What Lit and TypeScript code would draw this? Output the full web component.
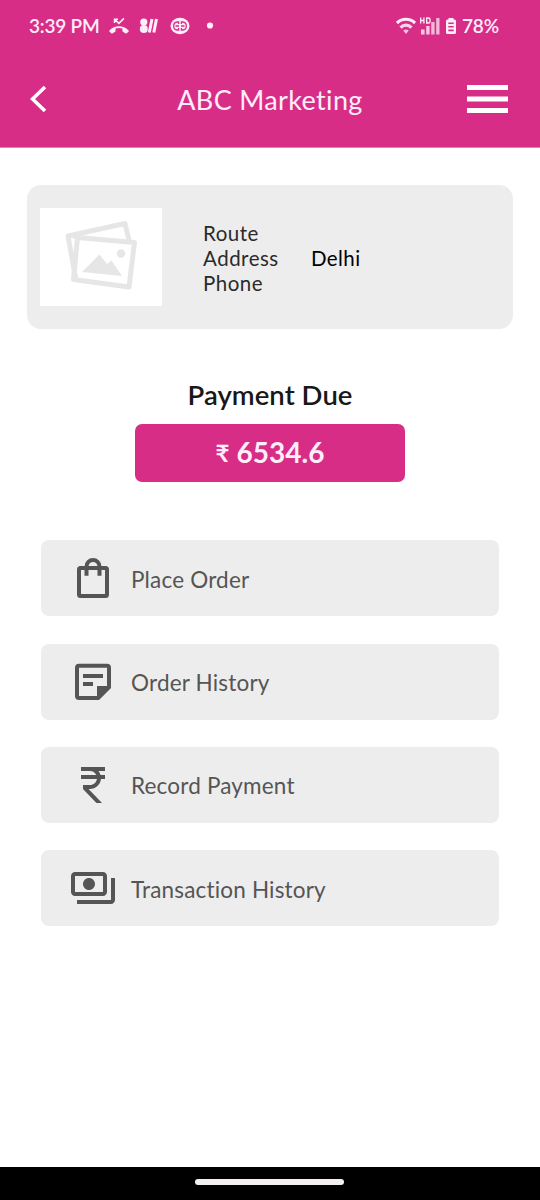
import { LitElement, html, css, svg } from "lit";
import { customElement, property } from "lit/decorators.js";

const bag = svg`
  <rect x="8" y="12" width="28" height="28" rx="1.5" fill="none" stroke="currentColor" stroke-width="4"/>
  <path d="M15.500 19.800V10.500a6.500 6.500 0 0 1 13 0V19.800" fill="none" stroke="currentColor" stroke-width="4"/>`;
const note = svg`
  <path fill="currentColor" fill-rule="evenodd" d="M8 3.800h28a4 4 0 0 1 4 4V28L28 40H8a4 4 0 0 1-4-4V7.800a4 4 0 0 1 4-4zM8 7.800V36H26V26H36V7.800z"/>
  <path fill="currentColor" d="M12 14h20v4H12zM12 22h10v4H12z"/>`;
const rupee = svg`
  <path fill="currentColor" transform="translate(-2 -2) scale(2)" d="M13.66 7C13.1 5.82 11.9 5 10.5 5H6V3h12v2h-3.26c.48.58.84 1.26 1.05 2H18v2h-2.02c-.25 2.8-2.61 5-5.48 5h-.73l6.73 7h-2.77L7 14v-2h3.5c1.76 0 3.22-1.3 3.46-3H6V7h7.66z"/>`;
const payments = svg`
  <path fill="currentColor" transform="translate(-2 -2) scale(2)" d="M19 14V6c0-1.1-.9-2-2-2H3c-1.1 0-2 .9-2 2v8c0 1.1.9 2 2 2h14c1.1 0 2-.9 2-2zm-2 0H3V6h14v8zm-7-7c-1.66 0-3 1.34-3 3s1.34 3 3 3 3-1.34 3-3-1.34-3-3-3zm13 0v11c0 1.1-.9 2-2 2H4v-2h17V7h2z"/>`;

@customElement("status-bar")
class StatusBar extends LitElement {
  static styles = css`
    :host { display: flex; justify-content: space-between; height: 52px; padding: 0 41px 0 29px; color: #ffeefa; font: 600 19px/52px Lato, sans-serif; }
    .side { display: flex; align-items: center; }
    svg { display: block; flex: none; }
    .time { width: 80px; letter-spacing: -0.2px; white-space: nowrap; }
    .pct { width: 37px; letter-spacing: -0.2px; white-space: nowrap; }
    .call { margin-right: 10px; }
    .app { margin-right: 12px; }
    .globe { margin-right: 16px; }
    .wifi { margin-right: 4px; }
    .signal { margin-right: 5px; }
    .battery { margin-right: 5px; }
  `;
  render() {
    return html`
      <div class="side">
        <span class="time">3:39 PM</span>
        <svg class="call" width="20" height="18" viewBox="0 0 20 18">
          <path d="M5.500 6V2.200H9M5.700 2.400l4.200 4 5-5" fill="none" stroke="currentColor" stroke-width="1.500"/>
          <path d="M.6 13.200C5.500 7.800 14.500 7.800 19.400 13.200c.5.6.5 1 0 1.500l-1.700 1.500c-.4.4-.9.4-1.400.1l-2.400-1.600c-.4-.3-.5-.6-.5-1V11.500c-2.200-.7-4.600-.7-6.800 0v2.200c0 .4-.2.8-.5 1L3.700 16.300c-.5.3-1 .3-1.400-.1L.6 14.700c-.5-.5-.5-.9 0-1.500z" fill="currentColor"/>
        </svg>
        <svg class="app" width="19" height="18" viewBox="0 0 19 18">
          <circle cx="4.800" cy="5" r="3.600" fill="currentColor"/><circle cx="4.800" cy="12" r="4" fill="currentColor"/>
          <path d="M10.300 15.500 13 2M14.800 15.500 17.500 2" stroke="currentColor" stroke-width="3"/>
        </svg>
        <svg class="globe" width="20" height="18" viewBox="0 0 20 18">
          <ellipse cx="10" cy="9" rx="9.500" ry="8.200" fill="currentColor"/>
          <path d="M8.600 5H7.200C2.500 5.300 2.500 12.700 7.200 13H8.600M11.400 5h1.400c4.700.3 4.700 7.700 0 8h-1.400M5.500 9h3.500M11 9h3.500M8.600 4.300v2.700M11.400 4.300v2.700M8.600 11v2.700M11.400 11v2.700" fill="none" stroke="#d72d87" stroke-width="1.300"/>
        </svg>
        <svg width="8" height="8" viewBox="0 0 8 8"><circle cx="4" cy="3.500" r="3.100" fill="currentColor"/></svg>
      </div>
      <div class="side">
        <svg class="wifi" width="20" height="18" viewBox="0 0 20 18">
          <g fill="none" stroke="currentColor" stroke-width="3.200">
            <path d="M1 6C6 1 14 1 19 6"/><path d="M4.500 10.600C7.500 7.400 12.500 7.400 15.500 10.600" opacity=".85"/>
          </g>
          <path d="M7.200 13.600C8.900 12.100 11.100 12.100 12.800 13.600L10 17z" fill="currentColor" opacity=".75"/>
        </svg>
        <svg class="signal" width="20" height="20" viewBox="0 0 20 20">
          <path d="M.7 1.500v6M3.900 1.500v6M.7 4.500h3.200M6.700 2v5h1.800q1.500 0 1.500-1.300V3.300Q10 2 8.500 2z" fill="none" stroke="currentColor" stroke-width="1.300"/>
          <path d="M1 13.500h3.600v5H1zM6.200 10h3.400v8.500H6.200z" fill="currentColor" opacity=".8"/>
          <path d="M11.200 6h3.400v12.500h-3.400zM16.200 2h3.300v16.500h-3.300z" fill="currentColor" opacity=".72"/>
        </svg>
        <svg class="battery" width="12" height="18" viewBox="0 0 12 18">
          <path fill="currentColor" fill-rule="evenodd" d="M3.500 1h5v1.500h1q1.500 0 1.500 1.500v11.500q0 1.500-1.500 1.500h-7Q1 17 1 15.500V4q0-1.500 1.500-1.500h1zM3.300 5.500V7h5.400V5.500zM3.300 9v1.600h5.400V9zM3.300 12.600v1.600h5.400v-1.600z"/>
        </svg>
        <span class="pct">78%</span>
      </div>`;
  }
}

@customElement("menu-row")
class MenuRow extends LitElement {
  @property() label = "";
  @property({ attribute: false }) icon: unknown = null;
  static styles = css`
    :host { display: flex; align-items: center; box-sizing: border-box; height: 76px; padding-left: 30px; border-radius: 8px; background: #ededed; color: #555; }
    svg { display: block; flex: none; margin-right: 16px; }
    .label { font: 400 22.5px/30px Lato, sans-serif; letter-spacing: 0.18px; white-space: nowrap; padding-top: 3px; }
  `;
  render() {
    return html`<svg width="44" height="44" viewBox="0 0 44 44">${this.icon}</svg><span class="label">${this.label}</span>`;
  }
}

@customElement("app-root")
class AppRoot extends LitElement {
  static styles = css`
    :host { display: flex; flex-direction: column; height: 1200px; background: #fff; font-family: Lato, sans-serif; }
    header { height: 147px; background: #d72d87; flex: none; border-bottom: 1px solid #e680b7; }
    svg { display: block; }
    .nav { display: flex; align-items: center; justify-content: space-between; height: 94px; padding: 0 32px 0 30px; }
    .back, .burger { width: 41px; }
    .title { color: #ffeefa; font-size: 27px; line-height: 36px; letter-spacing: 0.35px; padding: 2px 0 0 2px; white-space: nowrap; }
    main { flex: 1; }
    .card { display: flex; height: 144px; margin: 37px 27px 0; border-radius: 14px; background: #ededed; box-sizing: border-box; padding: 23px 13px; }
    .photo { width: 122px; height: 98px; background: #fff; }
    .info { display: grid; grid-template-columns: 108px auto; grid-auto-rows: 25px; align-content: start; margin: 13px 0 0 41px; font-size: 20.5px; line-height: 25px; letter-spacing: 0.5px; color: #2b2b2b; }
    .value { color: #000; letter-spacing: 0.4px; }
    h2 { margin: 48px 0 0; height: 36px; font-size: 27.5px; line-height: 36px; font-weight: 600; letter-spacing: 0.05px; text-align: center; color: #181818; }
    .amount { width: 270px; height: 58px; margin: 11px auto 0; border-radius: 7px; background: #d72d87; color: #ffeefa; font-size: 28px; line-height: 56px; font-weight: 700; display: flex; align-items: flex-start; justify-content: center; gap: 7px; }
    .rs { font-size: 24px; line-height: 58px; }
    .rows { display: grid; gap: 27.3px; margin: 58.4px 41px 0; }
    footer { flex: none; height: 33px; background: #000; display: flex; }
    .pill { width: 149px; height: 6px; margin: 12px 0 0 195px; border-radius: 3px; background: #f3eef2; }
  `;
  render() {
    return html`
      <header>
        <status-bar></status-bar>
        <div class="nav">
          <div class="back"><svg width="18" height="28" viewBox="0 0 18 28"><path d="M15 2 2.500 14 15 26" fill="none" stroke="#fff" stroke-width="3.600"/></svg></div>
          <div class="title">ABC Marketing</div>
          <div class="burger"><svg width="41" height="28" viewBox="0 0 41 28"><path d="M0 0h41v5H0zM0 11.500h41v5H0zM0 23h41v5H0z" fill="#fff"/></svg></div>
        </div>
      </header>
      <main>
        <section class="card">
          <div class="photo">
            <svg width="122" height="98" viewBox="0 0 122 98">
              <g fill="none" stroke="#e6e6e6" stroke-width="5" stroke-linejoin="round">
                <path d="M36 72 28 28 85 15.500 89 32"/>
                <path d="M37.500 29.500 94.500 34.500 89 79 33.500 71.500z"/>
                <path d="M33 28 40 29"/>
              </g>
              <path d="M42 64 59.500 46.500 67 56 71.500 52.500 82 68z" fill="#e6e6e6"/>
              <circle cx="81" cy="45.500" r="4.200" fill="#e6e6e6"/>
            </svg>
          </div>
          <div class="info">
            <span>Route</span><span></span>
            <span>Address</span><span class="value">Delhi</span>
            <span>Phone</span><span></span>
          </div>
        </section>
        <h2>Payment Due</h2>
        <div class="amount"><span class="rs">₹</span><span>6534.6</span></div>
        <div class="rows">
          <menu-row label="Place Order" .icon=${bag}></menu-row>
          <menu-row label="Order History" .icon=${note}></menu-row>
          <menu-row label="Record Payment" .icon=${rupee}></menu-row>
          <menu-row label="Transaction History" .icon=${payments}></menu-row>
        </div>
      </main>
      <footer><div class="pill"></div></footer>`;
  }
}
